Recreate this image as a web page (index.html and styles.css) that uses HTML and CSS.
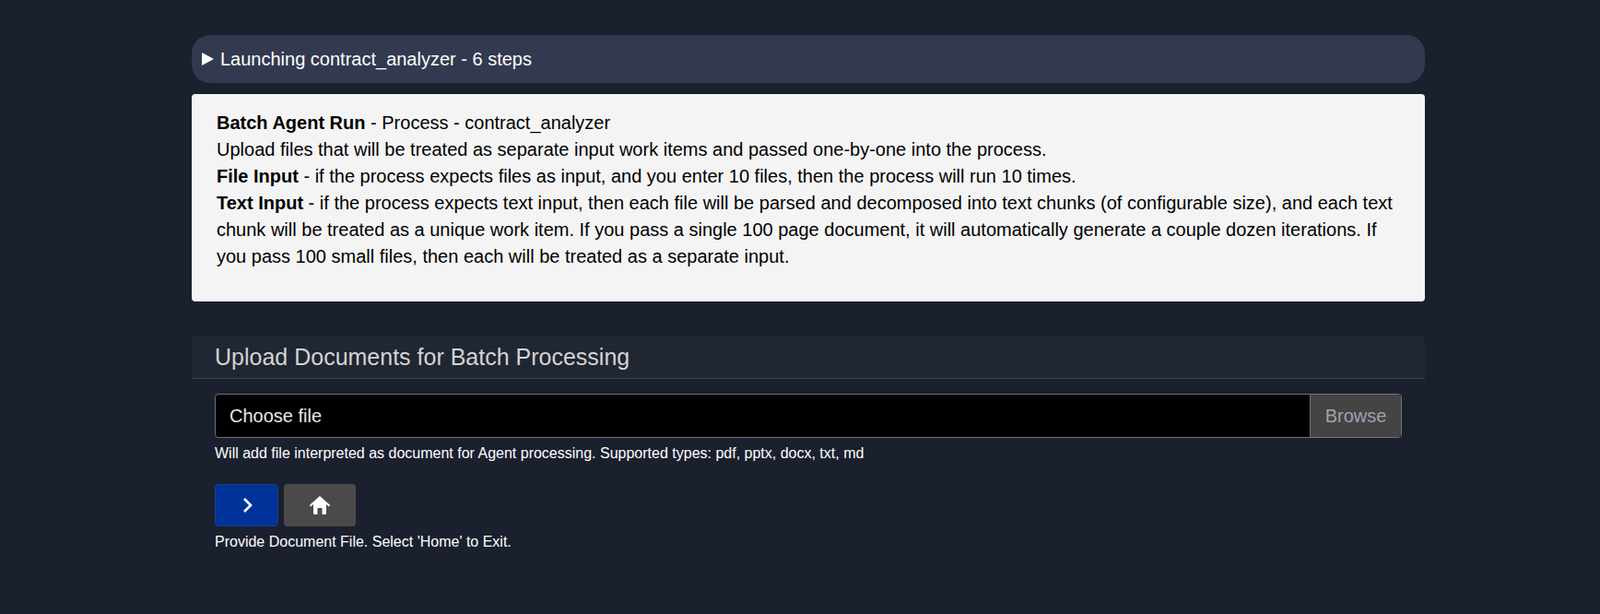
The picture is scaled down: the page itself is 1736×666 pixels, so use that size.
FILE: index.html
```html
<!DOCTYPE html>
<html lang="en">

<head>
    <meta charset="UTF-8">
    <meta name="viewport" content="width=device-width, initial-scale=1.0">
    <title>Batch Agent Run</title>
    <link rel="stylesheet" href="styles.css">
</head>

<body>

    <div class="container">
        <div class="steps-bar">
            <svg class="steps-arrow" width="13" height="14" viewBox="0 0 13 14"><path d="M0 0l13 7L0 14z" fill="#fff"/></svg>
            <span>Launching contract_analyzer - 6 steps</span>
        </div>

        <div class="info-card">
            <strong>Batch Agent Run</strong> - Process - contract_analyzer<br>
            Upload files that will be treated as separate input work items and passed one-by-one into the process.<br>
            <strong>File Input</strong> - if the process expects files as input, and you enter 10 files, then the process will run 10 times.<br>
            <strong>Text Input</strong> - if the process expects text input, then each file will be parsed and decomposed into text chunks (of configurable size), and each text chunk will be treated as a unique work item. If you pass a single 100 page document, it will automatically generate a couple dozen iterations. If you pass 100 small files, then each will be treated as a separate input.
        </div>

        <div class="upload-header">Upload Documents for Batch Processing</div>

        <div class="upload-body">
            <div class="file-input">
                <span class="file-label">Choose file</span>
                <span class="file-browse">Browse</span>
            </div>
            <div class="hint">Will add file interpreted as document for Agent processing. Supported types: pdf, pptx, docx, txt, md</div>

            <div class="button-row">
                <button class="btn btn-next" aria-label="Next">
                    <svg width="13" height="18" viewBox="0 0 13 18"><path d="M4 2l7 7-7 7" fill="none" stroke="#fff" stroke-width="2.600"/></svg>
                </button>
                <button class="btn btn-home" aria-label="Home">
                    <svg width="22" height="20" viewBox="0 0 22 20"><path d="M11 0L.3 9.500a1 1 0 0 0 1.400 1.500L4 9v9.500A1.500 1.500 0 0 0 5.500 20H8.500v-7h5v7h3a1.500 1.500 0 0 0 1.500-1.500V9l2.300 2a1 1 0 0 0 1.400-1.500z" fill="#fff"/></svg>
                </button>
            </div>
            <div class="hint">Provide Document File. Select 'Home' to Exit.</div>
        </div>
    </div>

</body>

</html>
```

FILE: styles.css
```css
body {
    margin: 0;
    background-color: #1a202e;
    font-family: "Liberation Sans", Arial, sans-serif;
}

.container {
    width: 1338px;
    margin-left: 208px;
    padding-top: 38px;
}

.steps-bar {
    display: flex;
    align-items: center;
    gap: 7px;
    height: 52px;
    padding-left: 11px;
    border-radius: 20px;
    background-color: #33394e;
    color: #fff;
    font-size: 20px;
}

.info-card {
    height: 225px;
    box-sizing: border-box;
    margin-top: 12px;
    padding: 17px 26px 17px 27px;
    border-radius: 4px;
    background-color: #f4f4f4;
    color: #000;
    font-size: 20px;
    line-height: 29px;
}

.upload-header {
    box-sizing: border-box;
    height: 47px;
    margin-top: 37px;
    padding: 9px 25px 0;
    border-bottom: 1px solid #3a3f4e;
    border-radius: 4px 4px 0 0;
    background-color: #202632;
    color: #d3d3d3;
    font-size: 25px;
}

.upload-body {
    padding: 16px 25px 0;
}

.file-input {
    display: flex;
    align-items: stretch;
    height: 48px;
    box-sizing: border-box;
    border: 1px solid #6b7280;
    border-radius: 4px;
    background-color: #000;
    overflow: hidden;
    font-size: 20px;
}

.file-label {
    flex: 1;
    padding-left: 15px;
    color: #e8e8e8;
    line-height: 46px;
}

.file-browse {
    width: 98px;
    border-left: 1px solid #6b7280;
    background-color: #444;
    color: #9aa5b1;
    line-height: 46px;
    text-align: center;
}

.hint {
    margin-top: 8px;
    color: #fff;
    font-size: 16px;
    line-height: 18px;
}

.button-row {
    display: flex;
    gap: 6px;
    margin-top: 24px;
}

.btn {
    display: flex;
    align-items: center;
    justify-content: center;
    height: 46px;
    padding: 0;
    border-radius: 4px;
}

.btn-next {
    width: 69px;
    border: 1px solid #1d4080;
    background-color: #00339a;
}

.btn-home {
    width: 78px;
    border: none;
    background-color: #4a4a4a;
}
```
